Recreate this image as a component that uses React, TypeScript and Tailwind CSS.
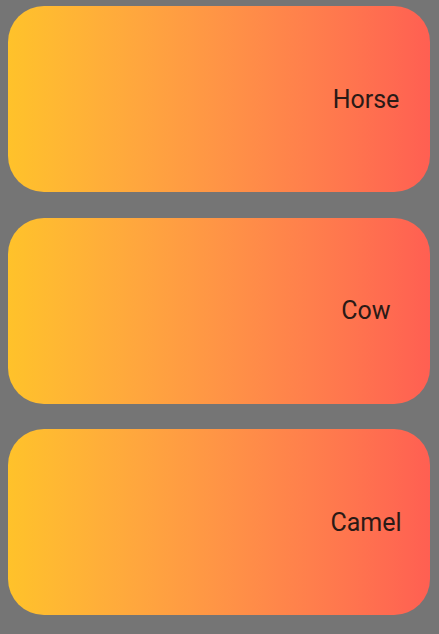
const animals = ["Horse", "Cow", "Camel"];

export default function App() {
  return (
    <div className="min-h-[634px] w-full bg-[#757575] pl-[8px] pr-[9px] pt-[6px] flex flex-col gap-[25.5px]">
      {animals.map((name) => (
        <div
          key={name}
          className="h-[186px] rounded-[36px] bg-gradient-to-r from-[#ffc22a] to-[#ff5f52] flex items-center justify-end"
        >
          <div className="w-[128px] pt-[1px] text-center text-[25px] text-[#2a1a16] font-['Roboto',sans-serif]">
            {name}
          </div>
        </div>
      ))}
    </div>
  );
}
